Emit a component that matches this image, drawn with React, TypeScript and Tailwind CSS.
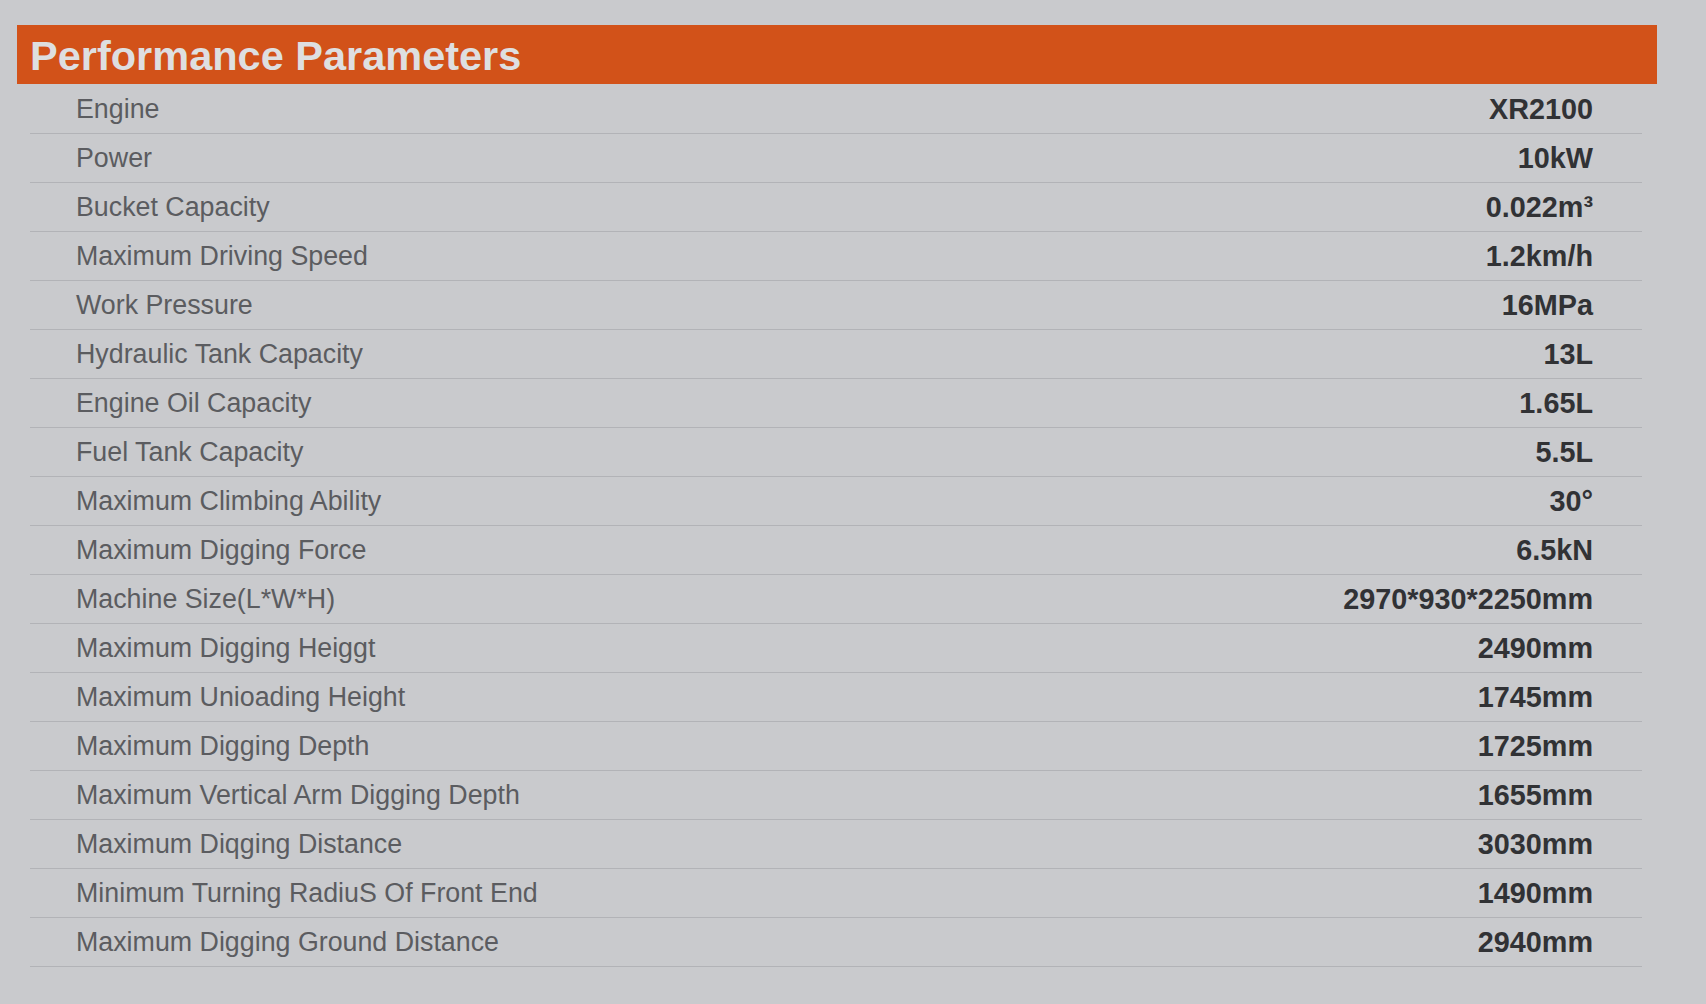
import React from "react";

const rows: [string, string][] = [
  ["Engine", "XR2100"],
  ["Power", "10kW"],
  ["Bucket Capacity", "0.022m³"],
  ["Maximum Driving Speed", "1.2km/h"],
  ["Work Pressure", "16MPa"],
  ["Hydraulic Tank Capacity", "13L"],
  ["Engine Oil Capacity", "1.65L"],
  ["Fuel Tank Capacity", "5.5L"],
  ["Maximum Climbing Ability", "30°"],
  ["Maximum Digging Force", "6.5kN"],
  ["Machine Size(L*W*H)", "2970*930*2250mm"],
  ["Maximum Digging Heiggt", "2490mm"],
  ["Maximum Unioading Height", "1745mm"],
  ["Maximum Digging Depth", "1725mm"],
  ["Maximum Vertical Arm Digging Depth", "1655mm"],
  ["Maximum Diqging Distance", "3030mm"],
  ["Minimum Turning RadiuS Of Front End", "1490mm"],
  ["Maximum Digging Ground Distance", "2940mm"],
];

export default function App() {
  return (
    <div
      className="min-h-screen w-full bg-[#c9cacd] pt-[25px] pl-[17px]"
      style={{ fontFamily: '"Liberation Sans", Arial, sans-serif' }}
    >
      <div className="w-[1640px] h-[59px] bg-[#d25219] flex items-center pl-[13px] pt-[2px]">
        <span className="text-[41.5px] font-bold text-[#dedfe0] leading-none">
          Performance Parameters
        </span>
      </div>
      <div className="ml-[13px] w-[1612px] mt-[1px]">
        {rows.map(([k, v]) => (
          <div
            key={k}
            className="h-[49px] border-b border-[#b2b3b7] flex items-center justify-between pl-[46px] pr-[49px]"
          >
            <span className="text-[26.8px] text-[#5b5c60] leading-none pt-[1px]">{k}</span>
            <span className="text-[28.8px] font-bold text-[#313235] leading-none pt-[1px]">{v}</span>
          </div>
        ))}
      </div>
    </div>
  );
}
